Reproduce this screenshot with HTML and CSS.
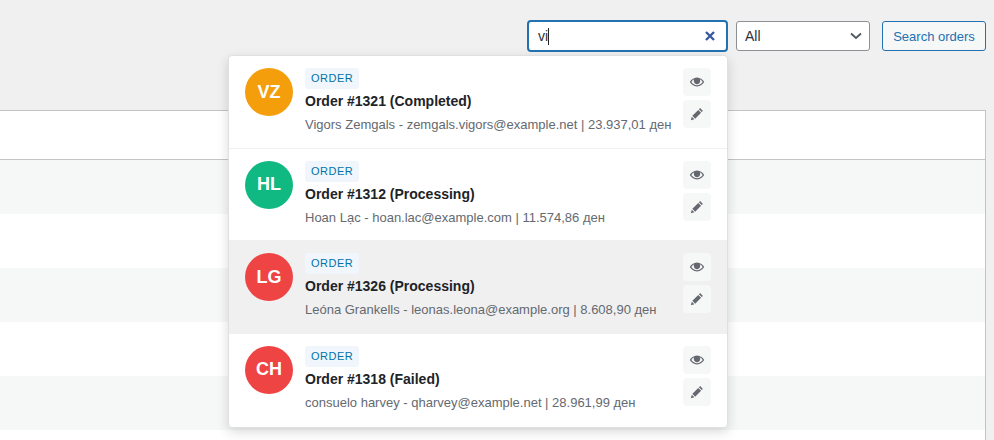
FILE: index.html
```html
<!DOCTYPE html>
<html lang="en">
<head>
  <meta charset="UTF-8" />
  <meta name="viewport" content="width=device-width, initial-scale=1.0" />
  <title>Orders</title>
  <link rel="stylesheet" href="styles.css">
</head>
<body>
  <svg class="icon-defs" width="0" height="0">
    <symbol id="icon-view" viewBox="0 0 20 20">
      <path d="M10 4.5C5.8 4.5 2.6 7.4 1 10c1.6 2.6 4.8 5.5 9 5.5s7.4-2.9 9-5.5c-1.6-2.6-4.8-5.5-9-5.5zm0 9.6c-2.9 0-5.5-1.7-7.1-4.1.9-1.4 2.2-2.6 3.7-3.3-.4.6-.6 1.300-.6 2.100 0 2.200 1.800 4 4 4s4-1.800 4-4c0-.8-.2-1.500-.6-2.100 1.500.7 2.800 1.900 3.700 3.300-1.600 2.400-4.200 4.100-7.100 4.100z"/>
      <circle cx="8.600" cy="7.600" r="1.300"/>
    </symbol>
    <symbol id="icon-edit" viewBox="0 0 20 20">
      <path d="M13.900 2.600l3.500 3.500-1.500 1.500-3.500-3.500zM11.600 4.900l3.500 3.500-7.400 7.400-3.500-3.500zM3.500 13.300l3.200 3.200-4.400 1.200z"/>
    </symbol>
  </svg>

  <div class="toolbar">
    <div class="search-box">
      <span class="search-value">vi</span>
      <span class="search-caret"></span>
      <svg class="search-clear" viewBox="0 0 12 12" width="12" height="12">
        <path d="M2 2l8 8M10 2l-8 8"/>
      </svg>
    </div>
    <div class="type-select">
      <span>All</span>
      <svg class="select-arrow" viewBox="0 0 12 8" width="12" height="8">
        <path d="M1 1.500l5 4.500 5-4.500"/>
      </svg>
    </div>
    <button class="search-button">Search orders</button>
  </div>

  <div class="orders-table">
    <div class="table-head"></div>
    <div class="table-row alt"></div>
    <div class="table-row"></div>
    <div class="table-row alt"></div>
    <div class="table-row"></div>
    <div class="table-row alt"></div>
    <div class="table-row"></div>
  </div>

  <ul class="results">
    <li class="result">
      <div class="avatar amber">VZ</div>
      <div class="result-body">
        <span class="badge">ORDER</span>
        <div class="result-title">Order #1321 (Completed)</div>
        <div class="result-meta">Vigors Zemgals - zemgals.vigors@example.net | 23.937,01 ден</div>
      </div>
      <div class="result-actions">
        <a class="action"><svg><use href="#icon-view"/></svg></a>
        <a class="action"><svg><use href="#icon-edit"/></svg></a>
      </div>
    </li>
    <li class="result">
      <div class="avatar green">HL</div>
      <div class="result-body">
        <span class="badge">ORDER</span>
        <div class="result-title">Order #1312 (Processing)</div>
        <div class="result-meta">Hoan Lạc - hoan.lac@example.com | 11.574,86 ден</div>
      </div>
      <div class="result-actions">
        <a class="action"><svg><use href="#icon-view"/></svg></a>
        <a class="action"><svg><use href="#icon-edit"/></svg></a>
      </div>
    </li>
    <li class="result active">
      <div class="avatar red">LG</div>
      <div class="result-body">
        <span class="badge">ORDER</span>
        <div class="result-title">Order #1326 (Processing)</div>
        <div class="result-meta">Leóna Grankells - leonas.leona@example.org | 8.608,90 ден</div>
      </div>
      <div class="result-actions">
        <a class="action"><svg><use href="#icon-view"/></svg></a>
        <a class="action"><svg><use href="#icon-edit"/></svg></a>
      </div>
    </li>
    <li class="result">
      <div class="avatar red">CH</div>
      <div class="result-body">
        <span class="badge">ORDER</span>
        <div class="result-title">Order #1318 (Failed)</div>
        <div class="result-meta">consuelo harvey - qharvey@example.net | 28.961,99 ден</div>
      </div>
      <div class="result-actions">
        <a class="action"><svg><use href="#icon-view"/></svg></a>
        <a class="action"><svg><use href="#icon-edit"/></svg></a>
      </div>
    </li>
  </ul>
</body>
</html>
```

FILE: styles.css
```css
html, body {
  height: 100%;
}

body {
  margin: 0;
  background: #f0f0f1;
  font-family: 'Liberation Sans', Arial, sans-serif;
  color: #1d2327;
  overflow: hidden;
  position: relative;
}

.icon-defs {
  position: absolute;
}

.toolbar {
  display: flex;
  justify-content: flex-end;
  align-items: center;
  height: 32px;
  padding: 20px 8px 0 0;
}

.search-box {
  box-sizing: border-box;
  width: 201px;
  height: 32px;
  display: flex;
  align-items: center;
  padding: 0 10px 0 9px;
  background: #fff;
  border: 2px solid #2271b1;
  border-radius: 4px;
  font-size: 14px;
  color: #2c3338;
}

.search-caret {
  width: 1px;
  height: 17px;
  background: #1d2327;
}

.search-clear {
  margin-left: auto;
}

.search-clear path {
  fill: none;
  stroke: #3858a0;
  stroke-width: 2.4;
}

.type-select {
  box-sizing: border-box;
  width: 134px;
  height: 30px;
  margin-left: 8px;
  display: flex;
  align-items: center;
  justify-content: space-between;
  padding: 0 7px 0 8px;
  background: #fff;
  border: 1px solid #8c8f94;
  border-radius: 3px;
  font-size: 14px;
  color: #2c3338;
}

.select-arrow path {
  fill: none;
  stroke: #50575e;
  stroke-width: 1.800;
}

.search-button {
  box-sizing: border-box;
  height: 30px;
  width: 104px;
  margin-left: 12px;
  padding: 0;
  background: #f6f7f7;
  border: 1px solid #2271b1;
  border-radius: 3px;
  color: #2271b1;
  font-family: inherit;
  font-size: 13px;
}

.orders-table {
  box-sizing: border-box;
  width: 986px;
  margin-top: 58px;
  background: #fff;
  border-top: 1px solid #c3c4c7;
  border-right: 1px solid #c3c4c7;
}

.table-head {
  height: 48px;
  border-bottom: 1px solid #c3c4c7;
}

.table-row {
  height: 54px;
}

.table-row.alt {
  background: #f6f7f7;
}

.results {
  position: absolute;
  top: 55px;
  left: 228px;
  box-sizing: border-box;
  width: 500px;
  margin: 0;
  padding: 0;
  list-style: none;
  background: #fff;
  border: 1px solid #e0e0e0;
  border-radius: 4px;
  box-shadow: 0 4px 12px rgba(0,0,0,0.15);
}

.result {
  display: flex;
  gap: 12px;
  height: 92.67px;
  box-sizing: border-box;
  padding: 12px 16px;
  border-bottom: 1px solid #f0f0f1;
}

.result:last-child {
  border-bottom: none;
}

.result.active {
  background: #f0f0f1;
}

.avatar {
  flex: none;
  width: 48px;
  height: 48px;
  border-radius: 50%;
  display: flex;
  align-items: center;
  justify-content: center;
  color: #fff;
  font-size: 18px;
  font-weight: bold;
}

.amber { background: #f59e0b; }
.green { background: #10b981; }
.red { background: #ef4444; }

.result-body {
  flex: 1;
  min-width: 0;
}

.badge {
  display: inline-block;
  height: 21px;
  line-height: 21px;
  padding: 0 6px;
  background: #f0f6fc;
  border-radius: 3px;
  color: #0073aa;
  font-size: 11px;
  letter-spacing: 0.5px;
}

.result-title {
  margin-top: 2px;
  font-size: 14px;
  line-height: 20px;
  font-weight: bold;
  color: #1d2327;
}

.result-meta {
  margin-top: 4px;
  font-size: 13px;
  line-height: 20px;
  color: #646970;
  white-space: nowrap;
}

.result-actions {
  flex: none;
  display: flex;
  flex-direction: column;
  gap: 4px;
}

.action {
  width: 28px;
  height: 28px;
  display: flex;
  align-items: center;
  justify-content: center;
  background: #f6f7f7;
  border-radius: 4px;
}

.action svg {
  width: 16px;
  height: 16px;
  fill: #646970;
}
```
